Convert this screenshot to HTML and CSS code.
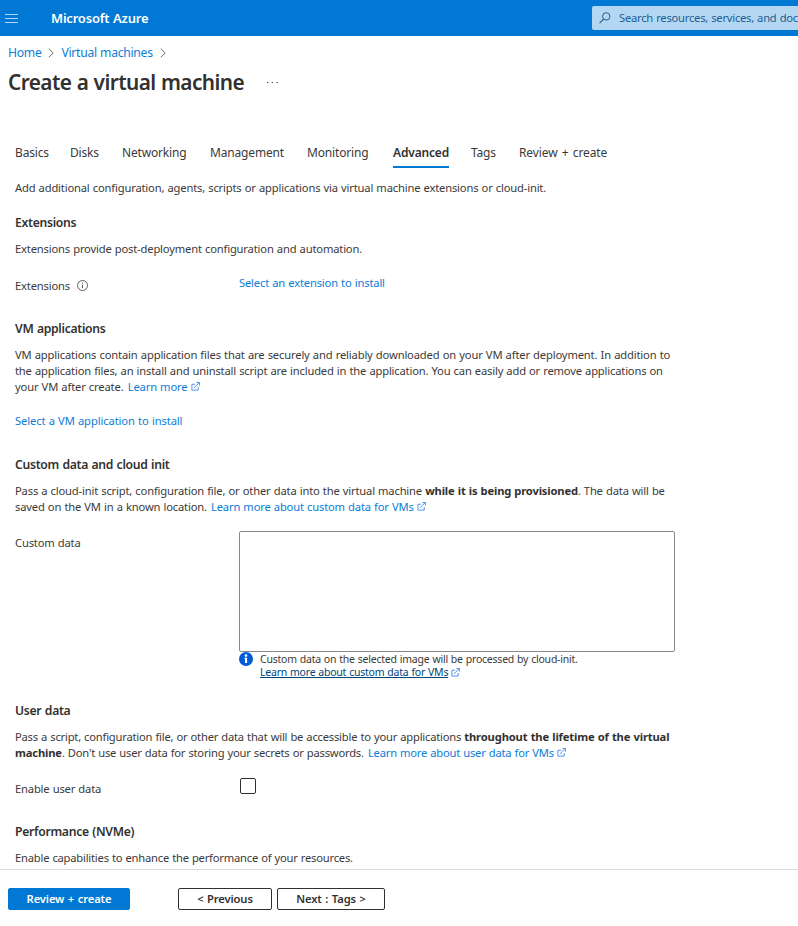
FILE: index.html
```html
<!DOCTYPE html>
<html lang="en">
<head>
<meta charset="utf-8">
<title>Create a virtual machine - Microsoft Azure</title>
<link rel="stylesheet" href="styles.css">
</head>
<body>
<svg class="defs" width="0" height="0" aria-hidden="true">
  <symbol id="external" viewBox="0 0 10 10"><path d="M4.5 2.5H1v6.5h7V5.5M3.5 6.5l5.5-5.8M6 .6h3.4V4" fill="none" stroke="currentColor" stroke-width=".95"/></symbol>
  <symbol id="chevron" viewBox="0 0 6 10"><path d="M.7.6 5.2 5 .7 9.4" fill="none" stroke="currentColor" stroke-width=".9"/></symbol>
</svg>
<header class="topbar">
  <svg class="menu" width="13" height="9" viewBox="0 0 13 9"><path d="M0 .5h13M0 4.5h13M0 8.5h13" stroke="currentColor"/></svg>
  <span class="brand">Microsoft Azure</span>
  <div class="search">
    <svg width="12" height="12" viewBox="0 0 12 12"><circle cx="7.2" cy="4.4" r="3.7" fill="none" stroke="currentColor"/><path d="M4.6 7.1.6 11.1" stroke="currentColor" stroke-width="1.2"/></svg>
    <span>Search resources, services, and doc</span>
  </div>
</header>
<nav class="crumbs">
  <a>Home</a><svg width="6" height="10"><use href="#chevron"/></svg><a class="crumb-vm">Virtual machines</a><svg width="6" height="10"><use href="#chevron"/></svg>
</nav>
<div class="title"><h1>Create a virtual machine</h1><svg class="more" width="11" height="2" viewBox="0 0 11 2"><path d="M0 .5h1.2M4.7.5h1.2M9.4.5h1.2" stroke="currentColor" stroke-width="1.2"/></svg></div>
<nav class="tabs">
  <a class="t-basics">Basics</a><a class="t-disks">Disks</a><a class="t-net">Networking</a><a class="t-man">Management</a><a class="t-mon">Monitoring</a><a class="t-adv active">Advanced</a><a class="t-tags">Tags</a><a class="t-rev">Review + create</a>
</nav>
<main>
  <p class="intro">Add additional configuration, agents, scripts or applications via virtual machine extensions or cloud-init.</p>
  <section class="extensions">
    <h2>Extensions</h2>
    <p>Extensions provide post-deployment configuration and automation.</p>
    <div class="row">
      <span class="label">Extensions <svg class="info" width="11" height="11" viewBox="0 0 11 11"><circle cx="5.5" cy="5.5" r="5" fill="none" stroke="currentColor" stroke-width=".8"/><path d="M5.5 4.6v3.6M5.5 2.6v1" stroke="currentColor" stroke-width=".8"/></svg></span>
      <a class="select-ext">Select an extension to install</a>
    </div>
  </section>
  <section class="applications">
    <h2>VM applications</h2>
    <p>VM applications contain application files that are securely and reliably downloaded on your VM after deployment. In addition to<br><span class="tight">the application files, an install and uninstall script are included in the application. You can easily add or remove applications on</span><br>your VM after create. <a class="learn">Learn more <svg width="9" height="9" viewBox="0 0 10 10"><use href="#external" width="10" height="10"/></svg></a></p>
    <p class="select-app"><a>Select a VM application to install</a></p>
  </section>
  <section class="custom">
    <h2>Custom data and cloud init</h2>
    <p>Pass a cloud-init script, configuration file, or other data into the virtual machine <b>while it is being provisioned</b>. The data will be<br>saved on the VM in a known location. <a class="learn">Learn more about custom data for VMs <svg width="9" height="9" viewBox="0 0 10 10"><use href="#external" width="10" height="10"/></svg></a></p>
    <div class="row custom-row">
      <span class="label">Custom data</span>
      <div class="field">
        <textarea aria-label="Custom data"></textarea>
        <div class="note">
          <svg class="badge" width="14" height="14" viewBox="0 0 14 14"><circle cx="7" cy="7" r="7" fill="#015cda"/><circle cx="7" cy="3.6" r="1.3" fill="#fff"/><path d="M5.5 5.7h2.6v5.3H6V6.9h-.5z" fill="#fff"/></svg>
          <div class="note-text">Custom data on the selected image will be processed by cloud-init.<br><a class="note-link">Learn more about custom data for VMs</a><svg class="note-ext" width="9" height="9" viewBox="0 0 10 10"><use href="#external" width="10" height="10"/></svg></div>
        </div>
      </div>
    </div>
  </section>
  <section class="user">
    <h2>User data</h2>
    <p class="user-text">Pass a script, configuration file, or other data that will be accessible to your applications <b>throughout the lifetime of the virtual<br>machine</b>. Don't use user data for storing your secrets or passwords. <a class="learn">Learn more about user data for VMs <svg width="9" height="9" viewBox="0 0 10 10"><use href="#external" width="10" height="10"/></svg></a></p>
    <div class="row user-row"><span class="label">Enable user data</span><input type="checkbox" aria-label="Enable user data"></div>
  </section>
  <section class="performance">
    <h2>Performance (NVMe)</h2>
    <p>Enable capabilities to enhance the performance of your resources.</p>
  </section>
</main>
<footer>
  <button class="primary">Review + create</button>
  <button class="previous">&lt; Previous</button>
  <button class="next">Next : Tags &gt;</button>
</footer>
</body>
</html>
```
FILE: styles.css
```css
* { box-sizing: border-box; }
body { margin: 0; width: 798px; height: 926px; overflow: hidden; display: flex; flex-direction: column; background: #fff; color: #3b3a39; font: 11.2px/16px "Noto Sans", sans-serif; letter-spacing: -.17px; word-spacing: .45px; white-space: nowrap; }
.defs { position: absolute; }
h1, h2, p { margin: 0; }
a { color: #0c7dd6; }
.topbar { flex: none; height: 36px; display: flex; align-items: center; background: #0078d4; color: #fff; padding-left: 5px; }
.menu { opacity: .7; }
.brand { margin-left: 33px; font-size: 13px; font-weight: 600; line-height: 18px; letter-spacing: -.2px; }
.search { margin-left: auto; width: 206px; height: 24px; flex: none; display: flex; align-items: center; gap: 8px; padding-left: 7px; border-radius: 2px 0 0 2px; background: #b3d7f2; color: #205d93; letter-spacing: -.23px; }
.search svg { flex: none; }
.crumbs { flex: none; height: 32px; display: flex; align-items: center; padding: 1px 0 0 8px; font-size: 12.2px; letter-spacing: -.3px; color: #605e5c; gap: 7px; }
.title { flex: none; height: 30px; display: flex; align-items: center; padding-left: 8px; gap: 23px; }
h1 { font-size: 20.8px; line-height: 30px; font-weight: 600; letter-spacing: -.57px; margin-top: -2px; color: #323130; }
.tabs { flex: none; height: 28px; margin: 42px 0 0 15px; display: flex; font-size: 12px; line-height: 26px; word-spacing: 1.2px; }
.tabs a { color: #3b3a39; flex: none; }
.t-basics { width: 55px; }
.t-disks { width: 52px; }
.t-net { width: 88px; }
.t-man { width: 97px; }
.t-mon { width: 86px; }
.t-adv { width: 56px; margin-right: 22px; }
.t-tags { width: 48px; }
.t-rev { letter-spacing: -.1px; }
.tabs .active { color: #323130; font-weight: 600; border-bottom: 2px solid #0078d4; }
main { flex: 1; min-height: 0; padding: 12px 0 0 15px; overflow: hidden; }
h2 { font-size: 12.2px; line-height: 18px; font-weight: 600; letter-spacing: -.3px; word-spacing: .6px; margin-bottom: 9px; color: #323130; }
b { color: #323130; }
section { margin-top: 18px; }
.row { display: flex; }
.label { width: 224px; flex: none; }
.extensions .row { margin-top: 18px; height: 24px; }
.extensions .label { padding-top: 3px; }
.info { margin-left: 4px; vertical-align: -1px; }
.applications { margin-top: 21px; }
.applications p { letter-spacing: -.155px; }
.applications .tight { letter-spacing: -.178px; }
.learn { margin-left: 1px; }
.learn svg { color: #3d82e6; vertical-align: 0; }
.applications .select-app { margin-top: 18px; letter-spacing: -.11px; }
.custom { margin-top: 27px; }
.custom-row { margin-top: 16px; }
.custom .label { padding-top: 4px; }
textarea { display: block; width: 436px; height: 121px; border: 1px solid #8a8886; border-radius: 2px; resize: none; padding: 0; background: #fff; }
.note { display: flex; gap: 7px; font-size: 10.5px; line-height: 13px; letter-spacing: -.22px; }
.note-text { padding-top: 1px; }
.note-link { color: #004578; text-decoration: underline; }
.note-ext { margin-left: 3px; color: #3d82e6; vertical-align: -1px; }
.user { margin-top: 23px; }
.user-text { letter-spacing: -.21px; }
.user-text b { letter-spacing: -.15px; }
.user-row { margin-top: 17px; height: 24px; }
.user .label { padding-top: 3px; }
input { appearance: none; width: 16px; height: 16px; margin: 0 0 0 1px; border: 1px solid #323130; border-radius: 2px; }
.performance { margin-top: 21px; }
.performance p { letter-spacing: -.21px; }
footer { flex: none; height: 57px; border-top: 1px solid #dcdcdc; display: flex; padding: 18px 0 0 8px; }
button { height: 22px; padding: 0; border: 1px solid #323130; border-radius: 2px; background: #fff; color: #323130; font: 600 11.2px/20px "Noto Sans", sans-serif; word-spacing: .8px; letter-spacing: -.12px; }
.primary { width: 122px; background: #0078d4; color: #fff; border-color: #0078d4; }
.previous { width: 94px; margin: 0 5px 0 48px; }
.next { width: 108px; }
```
